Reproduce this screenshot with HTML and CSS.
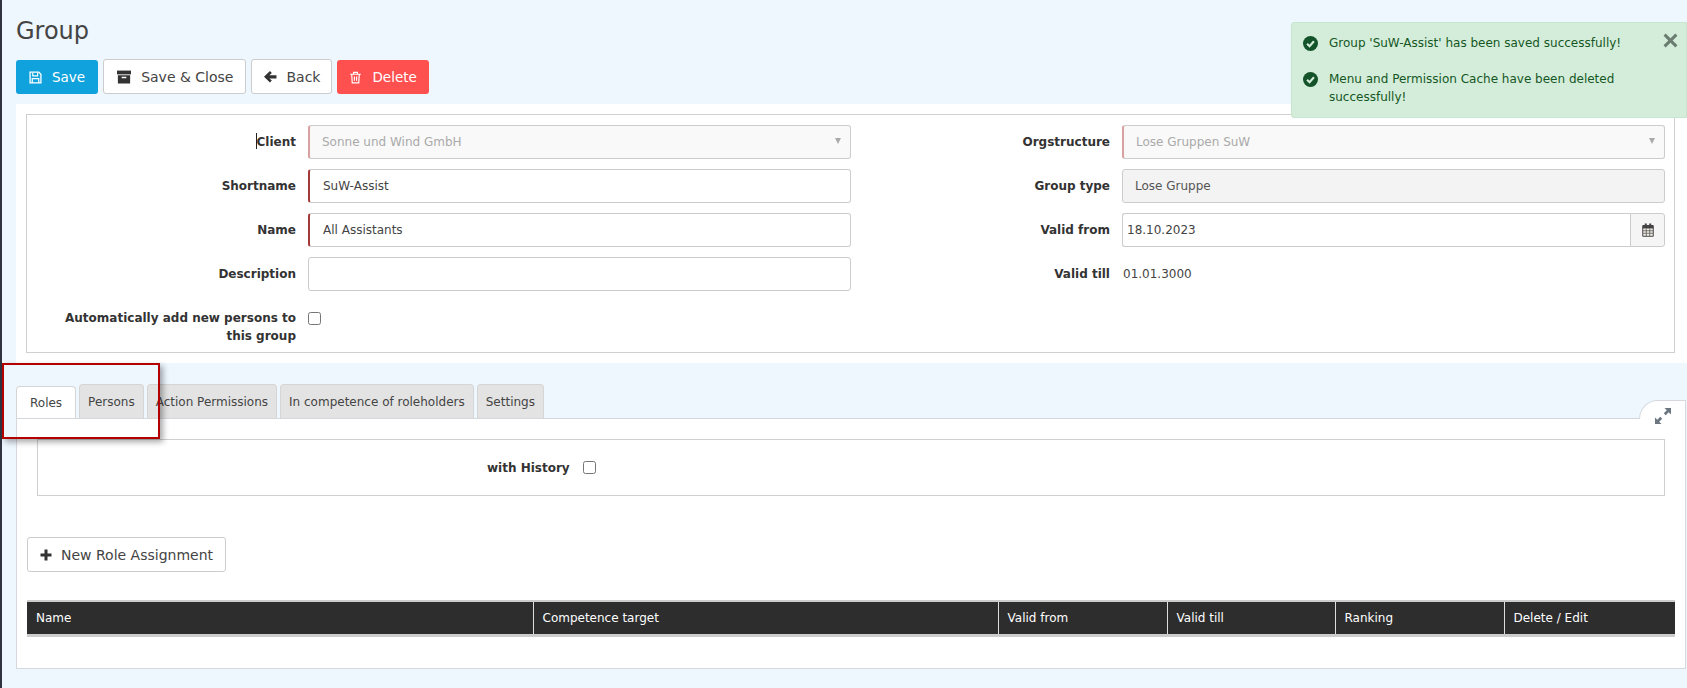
FILE: index.html
```html
<!DOCTYPE html>
<html lang="en">
<head>
    <meta charset="UTF-8">
    <title>Group</title>
    <link rel="stylesheet" href="styles.css">
</head>
<body>
<div class="page">
    <h1 class="page-title">Group</h1>

    <div class="toolbar">
        <button type="button" class="btn btn-primary">
            <svg class="icon" viewBox="0 0 24 24"><path d="M2 2h16l4 4v16H2z" fill="none" stroke="currentColor" stroke-width="2.400"/><path d="M7 3v6h9V3M6 22v-8h12v8" fill="none" stroke="currentColor" stroke-width="2.200"/></svg>
            Save
        </button>
        <button type="button" class="btn btn-default btn-wide">
            <svg class="icon" viewBox="0 0 24 24"><path d="M0 1h24v6.500H0z"/><path fill-rule="evenodd" d="M1.500 9h21v14h-21zM8 11.500V14h8v-2.500z"/></svg>
            Save &amp; Close
        </button>
        <button type="button" class="btn btn-default btn-back">
            <svg class="icon" viewBox="0 0 24 24"><path d="M11 2l3.500 3.500L10 9.500h13v6H10l4.500 4L11 23 0 12.500z"/></svg>
            Back
        </button>
        <button type="button" class="btn btn-danger">
            <svg class="icon" viewBox="0 0 24 24"><path d="M2 6h20M8.500 6V2.500h7V6M5 6l1 16h12l1-16M10 10v8M14 10v8" fill="none" stroke="currentColor" stroke-width="2.200"/></svg>
            Delete
        </button>
    </div>

    <div class="panel">
        <div class="box form-grid">
            <div class="form-col">
                <div class="form-row">
                    <label><span class="caret"></span>Client</label>
                    <div class="select-wrap"><select class="field required-off" disabled><option>Sonne und Wind GmbH</option></select></div>
                </div>
                <div class="form-row">
                    <label>Shortname</label>
                    <input class="field required" type="text" value="SuW-Assist">
                </div>
                <div class="form-row">
                    <label>Name</label>
                    <input class="field required" type="text" value="All Assistants">
                </div>
                <div class="form-row">
                    <label>Description</label>
                    <input class="field" type="text">
                </div>
                <div class="form-row form-row-last">
                    <label>Automatically add new persons to this group</label>
                    <input class="check" type="checkbox">
                </div>
            </div>
            <div class="form-col">
                <div class="form-row">
                    <label>Orgstructure</label>
                    <div class="select-wrap"><select class="field required-off" disabled><option>Lose Gruppen SuW</option></select></div>
                </div>
                <div class="form-row">
                    <label>Group type</label>
                    <input class="field readonly" type="text" value="Lose Gruppe" readonly>
                </div>
                <div class="form-row">
                    <label>Valid from</label>
                    <div class="date-group">
                        <input class="field date-input" type="text" value="18.10.2023">
                        <span class="date-addon">
                            <svg class="icon-cal" viewBox="0 0 24 28"><path d="M1.500 5h21v21.500h-21z" fill="#f4f1ea" stroke="currentColor" stroke-width="2"/><path d="M1.500 6h21v5h-21z"/><path d="M2 15.500h20M2 20.500h20M8.500 11v15M15.500 11v15" fill="none" stroke="currentColor" stroke-width="1.400"/><path d="M5.500 1h4v6h-4zM14.500 1h4v6h-4z"/></svg>
                        </span>
                    </div>
                </div>
                <div class="form-row">
                    <label>Valid till</label>
                    <span class="static-value">01.01.3000</span>
                </div>
            </div>
        </div>
    </div>

    <div class="tabs">
        <a class="tab active">Roles</a>
        <a class="tab">Persons</a>
        <a class="tab">Action Permissions</a>
        <a class="tab">In competence of roleholders</a>
        <a class="tab">Settings</a>
    </div>

    <div class="tab-content">
        <div class="expand-tab">
            <svg viewBox="0 0 16 16"><path d="M9.500 0H16v6.500l-2.300-2.300-3 3-1.900-1.900 3-3zM6.500 16H0V9.500l2.300 2.300 3-3 1.900 1.900-3 3z"/></svg>
        </div>

        <div class="box history-box">
            <label>with History</label>
            <input class="check" type="checkbox">
        </div>

        <button type="button" class="btn btn-default btn-new">
            <svg class="icon icon-plus" viewBox="0 0 24 24"><path d="M9 1h6v8h8v6h-8v8H9v-8H1V9h8z"/></svg>
            New Role Assignment
        </button>

        <table class="data-table">
            <thead>
                <tr>
                    <th class="col-name">Name</th>
                    <th class="col-target">Competence target</th>
                    <th class="col-date">Valid from</th>
                    <th class="col-till">Valid till</th>
                    <th class="col-date">Ranking</th>
                    <th>Delete / Edit</th>
                </tr>
            </thead>
        </table>
    </div>
</div>

<div class="toast">
    <span class="toast-close">
        <svg viewBox="0 0 14 14"><path d="M1.500 1.500l11 11M12.500 1.500l-11 11" fill="none" stroke="currentColor" stroke-width="2.800"/></svg>
    </span>
    <div class="toast-item">
        <svg class="toast-icon" viewBox="0 0 24 24"><circle cx="12" cy="12" r="12"/><path d="M6.500 12.500l4 4 7-8" fill="none" stroke="#d4edda" stroke-width="3.400"/></svg>
        <span>Group 'SuW-Assist' has been saved successfully!</span>
    </div>
    <div class="toast-item">
        <svg class="toast-icon" viewBox="0 0 24 24"><circle cx="12" cy="12" r="12"/><path d="M6.500 12.500l4 4 7-8" fill="none" stroke="#d4edda" stroke-width="3.400"/></svg>
        <span>Menu and Permission Cache have been deleted successfully!</span>
    </div>
</div>

<div class="highlight"></div>
</body>
</html>
```

FILE: styles.css
```css
* {
    box-sizing: border-box;
}

html, body {
    height: 100%;
}

body {
    margin: 0;
    font-family: "DejaVu Sans", sans-serif;
    font-size: 12px;
    color: #333;
    background-color: #eef6fe;
    overflow: hidden;
}

.page {
    min-height: 688px;
    border-left: 2px solid #2f3440;
    padding-left: 14px;
}

.page-title {
    margin: 0 0 13px;
    padding-top: 16px;
    font-size: 24px;
    line-height: 30px;
    font-weight: 400;
    color: #444;
}

/* buttons */
.toolbar {
    display: flex;
    align-items: flex-end;
    gap: 5px;
    height: 35px;
}

.btn {
    display: inline-flex;
    align-items: center;
    gap: 10px;
    height: 34px;
    padding: 0 12px;
    border: 1px solid transparent;
    border-radius: 3px;
    font-family: inherit;
    font-size: 13.500px;
    color: #333;
    background: #fff;
}

.btn-primary {
    background: #10a2dc;
    color: #fff;
}

.btn-default {
    gap: 9px;
    height: 35px;
    border-color: #ccc;
    font-size: 14px;
    color: #444;
}

.btn-default .icon {
    color: #333;
}

.btn-wide {
    gap: 10px;
    padding-left: 13px;
}

.btn-wide .icon {
    width: 14px;
    height: 14px;
}

.btn-back {
    padding-right: 11px;
}

.btn-danger {
    padding: 0 11px;
    background: #ff5050;
    color: #fff;
}

.icon {
    width: 13px;
    height: 13px;
    fill: currentColor;
}

.icon-plus {
    width: 12px;
    height: 12px;
}

/* form */
.panel {
    margin-top: 10px;
    padding: 10px 12px 10px 10px;
    background: #fff;
}

.box {
    border: 1px solid #d0d0d0;
}

.form-grid {
    display: grid;
    grid-template-columns: 1fr 1fr;
    padding: 10px 9px 0 10px;
}

.form-row {
    display: grid;
    grid-template-columns: 259px 1fr;
    column-gap: 12px;
    align-items: center;
    min-height: 34px;
    margin-bottom: 10px;
}

.form-row label {
    text-align: right;
    font-weight: 700;
    line-height: 18px;
}

.form-row-last {
    align-items: start;
    margin-bottom: 7px;
}

.form-row-last label {
    padding-top: 8px;
}

.form-row-last .check {
    margin-top: 11px;
}

.caret {
    display: inline-block;
    height: 16px;
    border-left: 1px solid #222;
    vertical-align: -3px;
}

.field {
    display: block;
    width: 100%;
    height: 34px;
    padding: 0 13px;
    border: 1px solid #ccc;
    border-radius: 3px;
    font-family: inherit;
    font-size: 12px;
    color: #444;
    background: #fff;
    outline: none;
}

.required {
    border-left: 2px solid #a33a3a;
}

.required-off {
    padding: 0 12px;
    border-left: 2px solid #d8a0a0;
    background: #f9f9f9;
    color: #aaa;
    opacity: 1;
    appearance: none;
}

.readonly {
    padding: 0 12px;
    background: #f3f3f3;
    color: #555;
}

.select-wrap {
    position: relative;
}

.select-wrap::after {
    content: "";
    position: absolute;
    top: 13px;
    right: 10px;
    border-left: 3px solid transparent;
    border-right: 3px solid transparent;
    border-top: 6px solid #aaa;
}

.date-group {
    display: flex;
}

.date-input {
    flex: 1;
    padding-left: 4px;
    border-right: none;
    border-radius: 3px 0 0 3px;
}

.date-addon {
    display: flex;
    align-items: center;
    justify-content: center;
    width: 35px;
    border: 1px solid #ccc;
    border-radius: 0 3px 3px 0;
    background: #f5f5f5;
}

.icon-cal {
    width: 12px;
    height: 14px;
    fill: #444;
    color: #444;
}

.static-value {
    margin-left: 1px;
    color: #444;
}

.check {
    width: 13px;
    height: 13px;
    margin: 0;
}

/* tabs */
.tabs {
    display: flex;
    align-items: flex-end;
    gap: 3px;
    margin-top: 21px;
    height: 34px;
}

.tab {
    display: flex;
    align-items: center;
    justify-content: center;
    height: 34px;
    padding: 0 8px;
    border: 1px solid #d5d5d5;
    border-bottom: none;
    border-radius: 4px 4px 0 0;
    background: #e3e3e3;
    color: #444;
}

.tab.active {
    height: 33px;
    padding: 0 13px;
    background: #fff;
    position: relative;
    top: 1px;
}

.tab-content {
    position: relative;
    height: 251px;
    padding: 20px 20px 0;
    border: 1px solid #d5d9de;
    background: #fff;
    margin-right: 1px;
}

.expand-tab {
    position: absolute;
    top: -19px;
    right: -1px;
    width: 47px;
    height: 19px;
    border-top: 1px solid #d5d9de;
    border-left: 1px solid #d5d9de;
    border-right: 1px solid #d5d9de;
    border-top-left-radius: 20px;
    background: #fff;
}

.expand-tab svg {
    position: absolute;
    top: 7px;
    left: 15px;
    width: 16px;
    height: 16px;
    fill: #6c7680;
}

.history-box {
    display: flex;
    align-items: center;
    height: 57px;
    padding-left: 449px;
    gap: 13px;
}

.history-box label {
    font-weight: 700;
}

.btn-new {
    display: flex;
    margin: 41px 0 0 -10px;
}

/* table */
.data-table {
    width: calc(100% + 20px);
    margin: 28px -10px 0;
    border-collapse: collapse;
    table-layout: fixed;
    border-top: 2px solid #ccc;
    border-bottom: 3px solid #ccc;
    background: #2d2d2d;
}

.data-table th {
    height: 34px;
    padding: 0 0 0 9px;
    text-align: left;
    font-weight: 400;
    color: #fff;
    border-right: 1px solid #ddd;
}

.data-table th:last-child {
    border-right: none;
}

.col-name { width: 506px; }
.col-target { width: 465px; }
.col-date { width: 169px; }
.col-till { width: 168px; }

/* messages */
.toast {
    position: absolute;
    top: 22px;
    left: 1291px;
    width: 396px;
    height: 96px;
    padding: 11px 40px 0 11px;
    border: 1px solid #c6e6cd;
    border-radius: 3px 0 0 3px;
    background: #d4edda;
    color: #155724;
}

.toast-item {
    display: flex;
    gap: 11px;
    line-height: 18px;
    margin-bottom: 18px;
}

.toast-icon {
    flex: none;
    width: 15px;
    height: 15px;
    margin-top: 2px;
    fill: #14522a;
}

.toast-close {
    position: absolute;
    top: 10px;
    right: 8px;
    width: 15px;
    height: 15px;
    color: #6b7d70;
}

.toast-close svg {
    display: block;
}

/* red marker drawn over the screenshot */
.highlight {
    position: absolute;
    top: 363px;
    left: 2px;
    width: 158px;
    height: 76px;
    border: 2px solid #b30000;
    box-shadow: 3px 3px 6px rgba(0, 0, 0, 0.35);
}
```
